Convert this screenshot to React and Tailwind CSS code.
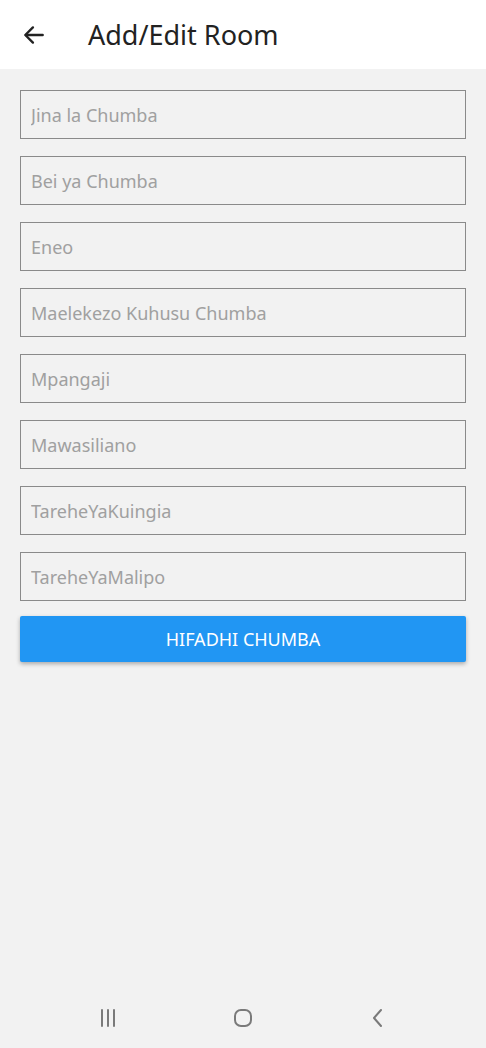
import React from 'react';

const fields = [
  'Jina la Chumba',
  'Bei ya Chumba',
  'Eneo',
  'Maelekezo Kuhusu Chumba',
  'Mpangaji',
  'Mawasiliano',
  'TareheYaKuingia',
  'TareheYaMalipo',
];

export default function App() {
  return (
    <div className="w-[486px] h-[1048px] bg-[#f2f2f2] flex flex-col" style={{ fontFamily: '"Noto Sans", "Open Sans", sans-serif' }}>
      {/* app bar */}
      <div className="h-[69px] bg-white flex items-center shrink-0">
        <div className="w-[88px] pl-[21px] flex items-center">
          <svg width="26" height="26" viewBox="0 0 24 24" fill="none" stroke="#222" strokeWidth="2.2" strokeLinecap="round" strokeLinejoin="round">
            <path d="M20 12H4.5" />
            <path d="M11 5l-7 7 7 7" />
          </svg>
        </div>
        <h1 className="text-[27px] text-[#222] leading-none">Add/Edit Room</h1>
      </div>

      {/* form */}
      <div className="flex flex-col px-5 pt-[21px]">
        <div className="flex flex-col gap-[17px]">
          {fields.map((f) => (
            <input
              key={f}
              type="text"
              placeholder={f}
              className="h-[49px] w-full border-[1.5px] border-[#8a8a8a] bg-transparent px-[10px] text-[18px] text-[#333] placeholder:text-[#a0a0a0] outline-none"
            />
          ))}
        </div>
        <button className="mt-[15px] h-[46px] w-full bg-[#2196f3] text-white text-[18px] rounded-[2px] shadow-[0_2px_4px_rgba(0,0,0,0.3)]">
          HIFADHI CHUMBA
        </button>
      </div>

      <div className="flex-1" />

      {/* system nav bar */}
      <div className="h-[58px] flex items-center justify-center gap-[113px] pb-[2px]">
        <svg width="22" height="22" viewBox="0 0 22 22" fill="none" stroke="#7a7a7a" strokeWidth="2" strokeLinecap="round">
          <path d="M5 3v16M11 3v16M17 3v16" />
        </svg>
        <svg width="22" height="22" viewBox="0 0 22 22" fill="none" stroke="#7a7a7a" strokeWidth="2">
          <rect x="3" y="3" width="16" height="16" rx="6" />
        </svg>
        <svg width="22" height="22" viewBox="0 0 22 22" fill="none" stroke="#7a7a7a" strokeWidth="2" strokeLinecap="round" strokeLinejoin="round">
          <path d="M14 3l-7 8 7 8" />
        </svg>
      </div>
    </div>
  );
}
